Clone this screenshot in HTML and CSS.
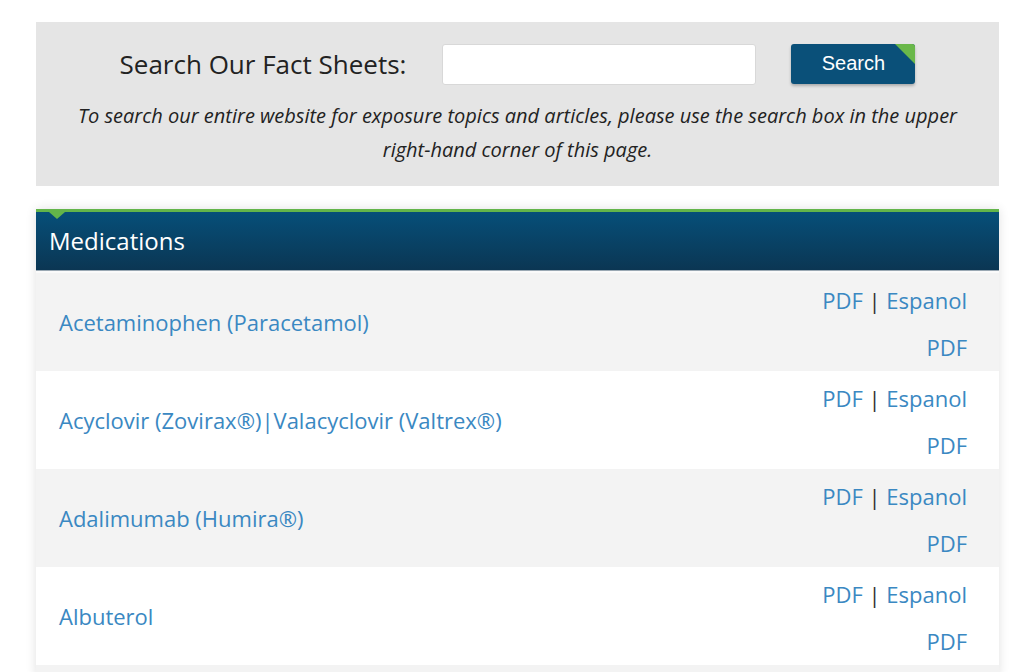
FILE: index.html
```html
<!DOCTYPE html>
<html lang="en">
<head>
  <meta charset="UTF-8">
  <meta name="viewport" content="width=device-width, initial-scale=1.0">
  <title>Fact Sheets</title>
  <link rel="stylesheet" href="styles.css">
</head>
<body>
  <div class="page">
    <div class="search-box">
      <form class="search-row" onsubmit="return false;">
        <label for="factSearch" class="search-label">Search Our Fact Sheets:</label>
        <input type="text" id="factSearch" class="search-input">
        <button type="submit" class="search-button">Search</button>
      </form>
      <p class="search-note">To search our entire website for exposure topics and articles, please use the search box in the upper right-hand corner of this page.</p>
    </div>

    <div class="panel">
      <div class="panel-header">
        <h2>Medications</h2>
      </div>
      <table class="sheet-list">
        <tr>
          <td class="sheet-name"><a href="#">Acetaminophen (Paracetamol)</a></td>
          <td class="sheet-links"><a href="#">PDF</a> <span class="sep">|</span> <a href="#">Espanol</a><br><a href="#">PDF</a></td>
        </tr>
        <tr>
          <td class="sheet-name"><a href="#">Acyclovir (Zovirax&reg;)|Valacyclovir (Valtrex&reg;)</a></td>
          <td class="sheet-links"><a href="#">PDF</a> <span class="sep">|</span> <a href="#">Espanol</a><br><a href="#">PDF</a></td>
        </tr>
        <tr>
          <td class="sheet-name"><a href="#">Adalimumab (Humira&reg;)</a></td>
          <td class="sheet-links"><a href="#">PDF</a> <span class="sep">|</span> <a href="#">Espanol</a><br><a href="#">PDF</a></td>
        </tr>
        <tr>
          <td class="sheet-name"><a href="#">Albuterol</a></td>
          <td class="sheet-links"><a href="#">PDF</a> <span class="sep">|</span> <a href="#">Espanol</a><br><a href="#">PDF</a></td>
        </tr>
      </table>
    </div>
  </div>
</body>
</html>
```

FILE: styles.css
```css
body {
  font-family: 'Open Sans', sans-serif;
  margin: 0;
  padding: 0;
  background-color: #ffffff;
  color: #222222;
}

.page {
  width: 963px;
  margin: 22px 0 0 36px;
}

.search-box {
  background-color: #e5e5e5;
  padding: 22px 20px 19px;
  text-align: center;
}

.search-row {
  display: flex;
  justify-content: center;
  align-items: center;
  gap: 35px;
  margin: 0 0 14px 0;
}

.search-label {
  font-size: 26px;
  color: #222222;
  margin-top: -2px;
}

.search-input {
  width: 314px;
  height: 41px;
  box-sizing: border-box;
  border: 1px solid #d8d8d8;
  border-radius: 3px;
  background-color: white;
  margin-left: 1px;
}

.search-button {
  position: relative;
  width: 124px;
  height: 40px;
  margin-top: -2px;
  border: none;
  border-radius: 3px;
  background-color: #0a5079;
  color: white;
  font-family: 'Liberation Sans', Arial, sans-serif;
  font-size: 20px;
  box-shadow: 0 2px 3px rgba(0, 0, 0, 0.25);
  overflow: hidden;
  cursor: pointer;
}

.search-button::after {
  content: '';
  position: absolute;
  top: 0;
  right: 0;
  border-top: 20px solid #6ab84a;
  border-left: 20px solid transparent;
}

.search-note {
  margin: 0;
  font-size: 20px;
  font-style: italic;
  line-height: 34px;
}

.panel {
  margin-top: 23px;
  padding-bottom: 12px;
  background-color: #f3f3f3;
  border-top: 3px solid #63b54a;
  box-shadow: 0 0 10px rgba(0, 0, 0, 0.12);
}

.panel-header {
  position: relative;
  height: 58px;
  background: linear-gradient(#064f79, #0b3653);
  border-bottom: 1px solid #9aa8b3;
}

.panel-header::before {
  content: '';
  position: absolute;
  top: 0;
  left: 13px;
  border-top: 7px solid #63b54a;
  border-left: 8px solid transparent;
  border-right: 8px solid transparent;
}

.panel-header h2 {
  margin: 0;
  padding-left: 13px;
  font-size: 24px;
  font-weight: normal;
  line-height: 58px;
  color: white;
}

.sheet-list {
  width: 100%;
  border-collapse: collapse;
  border-top: 2px solid #fafafa;
}

.sheet-list tr:nth-child(odd) {
  background-color: #f3f3f3;
}

.sheet-list tr:nth-child(even) {
  background-color: #ffffff;
}

.sheet-list td {
  font-size: 22px;
  vertical-align: middle;
}

.sheet-list a {
  color: #3a88c2;
  text-decoration: none;
}

.sheet-name {
  padding: 0 23px;
}

.sheet-links {
  padding: 4px 32px 0 0;
  text-align: right;
  line-height: 47px;
  height: 94px;
}

.sep {
  color: #333333;
}
```
